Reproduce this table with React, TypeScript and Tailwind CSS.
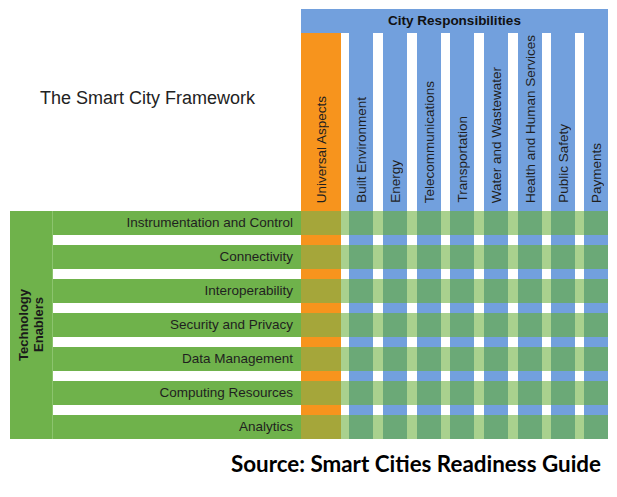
import React from "react";

type Col = { t: "o" | "b" | "w"; w: string; label?: string };

const cols: Col[] = [
  { t: "o", w: "w-[40px]", label: "Universal Aspects" },
  { t: "w", w: "w-[8px]" },
  { t: "b", w: "w-[24px]", label: "Built Environment" },
  { t: "w", w: "w-[10px]" },
  { t: "b", w: "w-[24px]", label: "Energy" },
  { t: "w", w: "w-[10px]" },
  { t: "b", w: "w-[24px]", label: "Telecommunications" },
  { t: "w", w: "w-[9px]" },
  { t: "b", w: "w-[24px]", label: "Transportation" },
  { t: "w", w: "w-[10px]" },
  { t: "b", w: "w-[24px]", label: "Water and Wastewater" },
  { t: "w", w: "w-[10px]" },
  { t: "b", w: "w-[24px]", label: "Health and Human Services" },
  { t: "w", w: "w-[9px]" },
  { t: "b", w: "w-[24px]", label: "Public Safety" },
  { t: "w", w: "w-[9px]" },
  { t: "b", w: "w-[24px]", label: "Payments" },
];

const headBg = { o: "bg-[#f7941d]", b: "bg-[#72a0dd]", w: "bg-white" };
const greenBg = { o: "bg-[#a5a63a]", b: "bg-[#6ba977]", w: "bg-[#a9d18e]" };

const enablers = [
  "Instrumentation and Control",
  "Connectivity",
  "Interoperability",
  "Security and Privacy",
  "Data Management",
  "Computing Resources",
  "Analytics",
];

function GreenRow({ label }: { label: string }) {
  return (
    <div className="flex h-[24px]">
      <div className="w-[248px] bg-[#6fb24b] flex items-center justify-end pr-[8px] text-[13.5px] text-[#1f1f1f]">
        {label}
      </div>
      {cols.map((c, i) => (
        <div key={i} className={`${c.w} ${greenBg[c.t]}`} />
      ))}
    </div>
  );
}

function BandRow() {
  return (
    <div className="flex h-[10px]">
      <div className="w-[248px] bg-white" />
      {cols.map((c, i) => (
        <div key={i} className={`${c.w} ${headBg[c.t]}`} />
      ))}
    </div>
  );
}

export default function App() {
  return (
    <div className="w-[617px] h-[497px] bg-white overflow-hidden font-['Liberation_Sans',Arial,sans-serif]">
      <div className="flex">
        <div className="w-[301px] pl-[40px] pt-[88px]">
          <div className="text-[18px] leading-[21px] text-[#222]">The Smart City Framework</div>
        </div>
        <div className="w-[307px] pt-[9px]">
          <div className="h-[24px] bg-[#72a0dd] flex items-center justify-center text-[13.5px] font-bold text-[#111]">
            City Responsibilities
          </div>
          <div className="flex h-[178px]">
            {cols.map((c, i) => (
              <div
                key={i}
                className={`${c.w} ${headBg[c.t]} flex items-end justify-center pb-[8px]`}
              >
                {c.label && (
                  <span className="[writing-mode:vertical-rl] rotate-180 whitespace-nowrap text-[13.5px] leading-[15px] text-[#1f1f1f]">
                    {c.label}
                  </span>
                )}
              </div>
            ))}
          </div>
        </div>
      </div>
      <div className="flex ml-[10px]">
        <div className="w-[43px] h-[228px] bg-[#6fb24b] border-r border-[#8cc46e] flex items-center justify-center">
          <span className="[writing-mode:vertical-rl] rotate-180 text-center text-[13px] leading-[15px] font-bold text-[#1a1a1a]">
            Technology
            <br />
            Enablers
          </span>
        </div>
        <div className="flex flex-col">
          {enablers.map((e, i) => (
            <React.Fragment key={e}>
              {i > 0 && <BandRow />}
              <GreenRow label={e} />
            </React.Fragment>
          ))}
        </div>
      </div>
      <div className="flex justify-end pr-[16px] mt-[12px]">
        <div className="font-['Lato',sans-serif] font-bold text-[22.4px] leading-[26px] text-black">
          Source: Smart Cities Readiness Guide
        </div>
      </div>
    </div>
  );
}
